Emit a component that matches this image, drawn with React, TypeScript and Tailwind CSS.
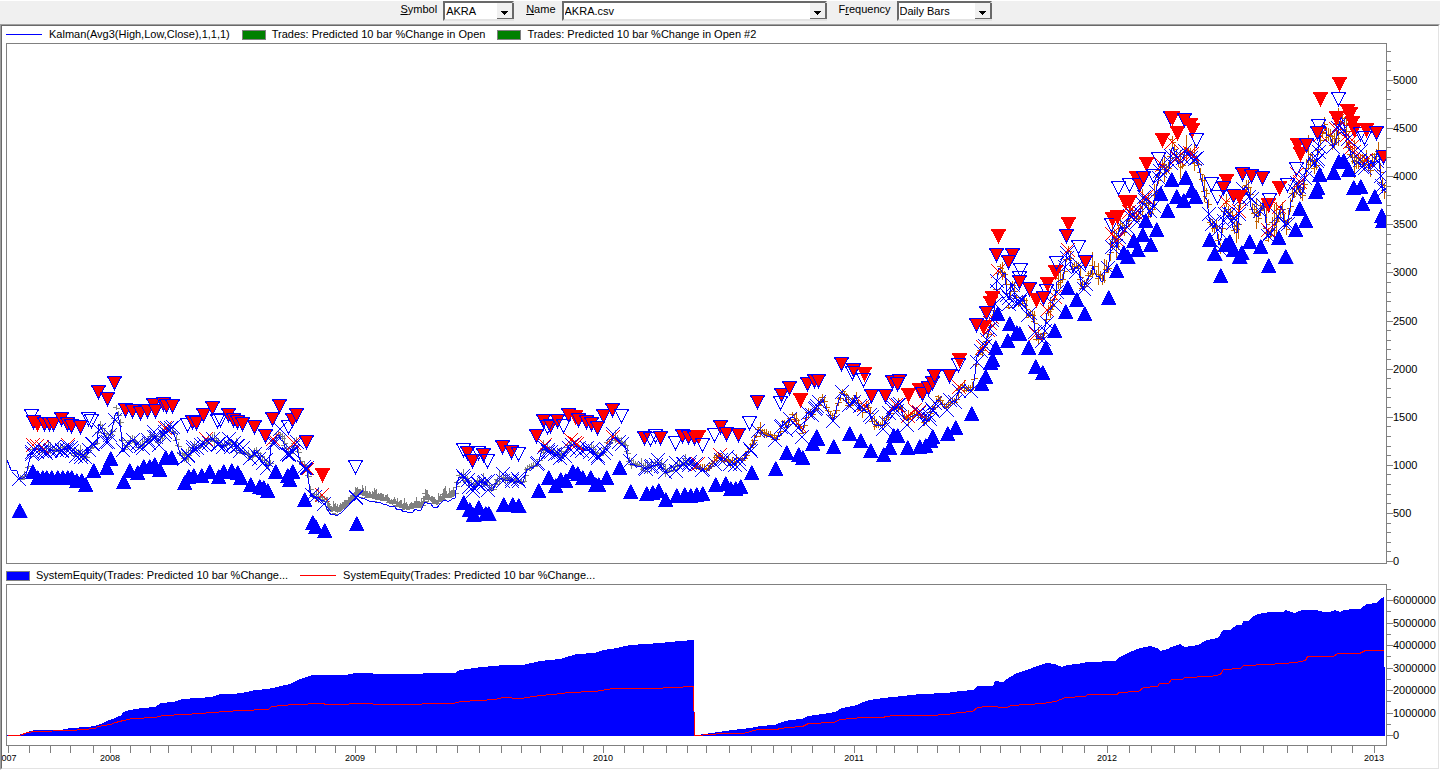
import React from 'react';
import type { ReactNode } from 'react';

type Point = [number, number];
// 'r' = filled, 'h' = hollow, 'b' = filled with outline
type Signal = [number, number, 'r' | 'h' | 'b'];

const toPoints = (data: string): Point[] =>
    data.trim().split(/\s+/).map((pair) => pair.split(',').map(Number) as Point);

const toSignals = (data: string): Signal[] =>
    data.trim().split(/\s+/).map((item) => {
        const [x, y] = item.slice(1).split(',').map(Number);
        return [x, y, item[0] as Signal[2]];
    });

const price = toPoints(`
7,458 11,468 17,470 20,479 26,476 30,457 33,448 43,450 55,449 67,448 78,453 86,457 90,447 97,443 99,422 107,440 112,432 116,407 120,423
123,450 128,442 133,438 138,448 153,435 158,442 167,428 173,430 180,452 185,458 193,448 213,438 220,445 230,442 240,450 250,457 255,450
267,465 270,463 271,445 279,433 289,455 296,442 300,460 307,470 311,495 323,498 330,511 337,513 348,503 357,494 365,497 380,500 407,509
422,507 425,500 437,504 443,498 455,495 458,477 465,478 473,488 480,480 492,489 501,477 523,482 527,468 538,463 543,447 553,452 563,455
570,442 577,447 592,448 598,458 605,447 613,437 625,445 630,463 647,467 658,462 667,472 683,462 693,465 705,470 718,457 730,463 742,460
753,443 758,429 777,440 783,420 787,427 792,413 802,433 807,412 812,415 822,398 833,420 842,390 850,405 855,395 862,412 867,402 872,422
883,425 893,408 900,407 907,420 915,413 927,420 938,398 945,407 955,400 960,387 973,388 977,354 983,350 988,333 994,313 997,280 999,267
1005,273 1008,307 1011,283 1018,303 1023,297 1028,313 1033,313 1036,337 1043,340 1047,313 1055,300 1057,283 1063,277 1067,250 1073,270
1078,267 1083,290 1088,273 1093,268 1098,277 1103,278 1108,265 1112,237 1117,243 1120,220 1125,233 1130,210 1138,218 1144,195 1152,214
1160,167 1169,170 1172,145 1180,170 1184,150 1197,162 1202,177 1206,197 1210,220 1215,223 1220,247 1223,220 1226,205 1237,230 1242,190
1247,187 1252,205 1258,216 1263,204 1268,233 1275,220 1281,205 1287,227 1292,203 1297,177 1302,190 1308,157 1311,167 1317,160 1321,130
1328,132 1333,143 1340,118 1347,138 1355,157 1360,155 1363,170 1368,158 1373,170 1378,157 1383,190`);

const sells = toSignals(`
h31,409 b33,415 r37,417 b44,417 b49,417 b53,417 b61,412 b67,417 b71,419 b80,420 b98,385 b107,392 b114,376 h88,412 h91,414
b125,403 b132,404 b140,406 b147,404 b153,398 b155,404 b163,397 b166,399 b172,399 h187,418 b192,415 b196,416 b203,408 b212,401
h217,414 h220,413 b228,408 b233,413 b237,415 b242,417 b254,420 b265,429 b279,399 b272,412 h288,420 b292,413 b296,408 b306,435
r322,468 h355,460 h463,443 b467,446 b472,454 h478,446 b483,448 h487,454 b502,440 b511,445 h518,447 b536,429 b543,414 b550,419
h547,420 b557,414 h563,419 b568,408 r575,410 b578,413 b586,415 b591,417 b597,421 b603,409 b612,403 h621,409 b644,431 h650,432
h655,429 b660,431 h675,436 b682,429 b688,430 b694,431 r698,430 h702,438 h714,428 b720,420 b726,427 b738,428 h749,416 b757,395
b781,388 h780,396 b789,381 r800,393 b807,377 b814,374 b818,374 b841,357 b853,363 h852,366 r864,367 h863,373 b871,389 b885,389
b892,375 b899,374 b897,377 r908,388 r919,383 b922,387 b928,381 b932,376 b934,369 b949,369 r959,353 h958,358 r983,320 b976,318
r990,296 b986,306 r992,291 r998,229 b996,248 b1012,248 b1008,255 h1020,263 h1019,271 b1019,275 b1029,282 r1036,293 r1047,277
h1046,284 b1043,291 r1055,265 h1056,256 r1068,217 b1066,229 h1078,240 b1085,255 r1112,212 h1111,218 r1117,210 r1125,195
r1129,195 h1118,181 h1129,178 r1136,171 b1139,178 b1143,171 r1146,157 h1158,152 h1153,169 r1162,133 b1170,111 r1172,111
r1177,126 b1184,113 r1190,118 r1192,123 h1196,133 h1211,177 r1226,174 b1223,181 h1217,190 b1233,189 r1239,190 b1242,167
b1251,169 b1262,171 r1268,198 h1269,193 r1279,181 h1287,178 h1296,162 r1297,138 r1300,147 b1306,138 r1320,92 h1318,119
b1317,126 r1339,77 h1338,92 r1336,111 r1347,104 r1350,107 r1352,116 r1354,123 h1360,127 r1366,123 h1364,131 b1376,126 b1383,150`);

const buys = toPoints(`
19,517 32,478 37,484 42,484 46,484 51,484 57,484 62,484 67,484 71,484 76,487 81,487 85,491 93,477 106,474 110,465 123,488
129,477 137,479 143,473 149,473 154,471 159,476 165,464 171,464 184,489 188,483 193,482 201,482 209,478 218,483 223,478
231,477 237,479 240,484 250,491 259,493 263,494 267,497 275,478 287,482 289,486 292,478 304,506 312,529 315,533 324,537
356,530 463,509 469,516 473,521 478,514 485,520 488,520 503,511 512,511 518,512 538,497 548,484 555,492 560,486 565,487
572,478 577,480 582,484 590,484 595,491 598,491 606,484 619,474 630,498 646,500 652,499 658,497 665,506 676,502 684,501
690,502 696,501 702,500 715,491 725,490 730,495 735,495 740,493 751,479 775,475 786,459 798,461 802,464 812,450 816,443
817,445 833,453 849,440 860,447 870,457 883,461 889,454 893,442 897,442 907,454 919,453 925,452 930,447 932,443 947,440
955,434 971,420 981,390 985,383 990,369 992,366 995,354 997,320 1009,330 1007,347 1016,339 1019,340 1028,354 1035,373
1042,379 1045,354 1054,337 1065,318 1067,294 1076,306 1084,320 1108,304 1116,277 1123,259 1127,263 1133,247 1137,256
1142,241 1150,251 1145,227 1156,236 1167,217 1160,200 1171,186 1176,203 1183,207 1185,184 1191,197 1195,203 1209,246
1214,260 1220,282 1225,251 1229,248 1233,256 1239,263 1241,259 1249,248 1260,253 1268,272 1278,244 1285,263 1295,236
1299,215 1305,227 1315,198 1317,194 1319,181 1333,179 1338,168 1343,167 1348,176 1353,194 1360,193 1362,210 1374,203
1381,222 1382,227`);

const equity = toPoints(`
7,735 19,735 27,732 35,730 61,730 70,728 87,727 95,726 103,723 107,721 115,718 122,715 123,712 130,710 142,708 155,707
161,703 173,702 183,699 212,697 220,694 233,694 247,692 255,690 268,689 277,687 290,684 300,679 312,675 345,675 355,673
390,674 455,673 460,670 475,668 480,667 495,666 502,665 523,665 540,661 560,659 577,654 595,653 603,650 617,648 630,645
660,643 680,641 693,640 694,640 694,735 698,735 718,732 733,730 750,728 760,726 775,725 782,722 790,720 802,719 808,716
823,714 835,712 842,708 857,705 863,702 870,700 883,698 903,696 920,694 947,693 960,691 973,690 978,686 993,686 995,681
1003,682 1010,677 1017,673 1027,670 1037,666 1047,663 1055,664 1062,667 1067,665 1077,664 1088,662 1115,661 1120,657 1130,652
1140,648 1150,646 1157,648 1160,651 1168,649 1171,647 1180,644 1185,647 1198,645 1207,640 1218,638 1223,630 1230,630
1237,625 1242,625 1243,621 1248,621 1252,617 1258,614 1270,612 1283,612 1285,610 1295,613 1302,610 1316,610 1324,612 1330,612
1335,610 1340,612 1344,610 1353,609 1360,609 1367,604 1376,603 1382,598 1384,597 1384,667 1385,667`);

const secondEquity = toPoints(`
7,735 19,735 27,732 35,731 70,730 95,728 97,726 110,724 115,722 123,720 132,718 155,717 162,715 185,714 212,712 240,710
268,709 271,706 293,704 323,703 325,704 343,704 355,703 390,704 453,703 460,701 479,700 495,699 502,697 520,698 540,695
562,693 567,692 595,691 612,688 653,688 673,687 693,686 694,735 712,734 720,733 743,733 757,729 775,729 787,727 802,726
808,723 833,722 840,719 862,717 881,717 893,715 928,715 947,714 959,712 972,711 977,707 987,706 1007,707 1010,705 1043,703
1055,701 1065,697 1085,696 1087,694 1117,694 1118,692 1138,691 1143,687 1157,686 1159,683 1168,683 1171,679 1182,679
1184,677 1210,676 1220,674 1223,669 1240,668 1243,665 1268,664 1295,662 1305,660 1307,656 1333,656 1337,653 1359,653
1365,650 1383,650`);

const dateTicks = [
    8, 29, 50, 70, 93, 110, 130, 150, 168, 191, 211, 233, 255, 276, 296, 315, 335, 355, 375, 396, 416, 436, 457, 479, 501, 521,
    540, 562, 583, 603, 624, 643, 666, 687, 706, 729, 751, 773, 791, 812, 834, 854, 876, 894, 917, 937, 959, 980, 1000, 1020,
    1040, 1062, 1084, 1107, 1129, 1151, 1174, 1195, 1219, 1240, 1263, 1287, 1307, 1331, 1352, 1374,
];

const years = [
    { x: 9, label: '007' },
    { x: 110, label: '2008' },
    { x: 355, label: '2009' },
    { x: 603, label: '2010' },
    { x: 854, label: '2011' },
    { x: 1107, label: '2012' },
    { x: 1374, label: '2013' },
];

const BULL = '#0000ff';
const BEAR = '#ff0000';
const AXIS = '#808080';

const noise = (n: number) => {
    const v = Math.sin(n * 127.1) * 43758.5453;
    return v - Math.floor(v);
};

function priceAt(x: number) {
    const next = price.findIndex((p) => p[0] >= x);
    if (next <= 0) return price[next === 0 ? 0 : price.length - 1][1];
    const [x0, y0] = price[next - 1];
    const [x1, y1] = price[next];
    return y0 + ((y1 - y0) * (x - x0)) / (x1 - x0);
}

// swings get wider as the price climbs
const closeAt = (x: number) => priceAt(x) + (noise(Math.floor(x / 3)) - 0.5) * (3 + Math.max(0, x - 960) / 30);

const isQuiet = (x: number) => x > 325 && x < 457;

const join = (points: Point[]) => points.map((p) => p.join(',')).join(' ');

// high-low stroke with the open tick on the left and the close tick on the right
function barPath(from: number, to: number) {
    let d = '';
    for (let x = from; x < to; x += isQuiet(x) ? 1 : 2) {
        const spike = noise(x + 7) > 0.85 ? 4 + Math.max(0, x - 960) / 40 : 0;
        const spread = 2 + noise(x) * 3 + Math.max(0, x - 940) / 100 + spike;
        const mid = Math.round(closeAt(x)) - (isQuiet(x) ? 2 : 0);
        const open = Math.round(mid + (noise(x + 5) - 0.5) * spread);
        d += `M${x + 0.5} ${mid - Math.round(spread)}V${mid + Math.round(isQuiet(x) ? 2 : spread * 0.8)}`;
        d += `M${x - 3} ${open + 0.5}h4M${x} ${mid + 0.5}h4`;
    }
    return d;
}

const kalman: Point[] = [];
for (let x = 7; x <= 1384; x += 2) {
    kalman.push([x, Math.round(closeAt(x) + (isQuiet(x) ? 3 : 1))]);
}

const cross = (x: number, y: number, r = 7) => `M${x - r} ${y - r}l${r * 2} ${r * 2}M${x - r} ${y + r}l${r * 2} ${-r * 2}`;

const blueCrosses = [
    ...sells.filter((s) => s[2] !== 'r').map(([x]) => cross(x + 1, Math.round(priceAt(x) - 4 + noise(x) * 7))),
    ...buys.map(([x]) => cross(x, Math.round(priceAt(x) - 2 + noise(x + 1) * 7))),
].join('');

const redCrosses = [
    ...sells.filter((s) => s[2] === 'r').map(([x]) => cross(x, Math.round(priceAt(x) - 3))),
    ...[33, 42, 68, 165, 206, 273, 294, 545, 571, 577, 720, 896, 915, 988].map((x) => cross(x, Math.round(priceAt(x) - 3))),
].join('');

function YearAxis() {
    return (
        <g>
            {dateTicks.map((x) => (
                <path key={x} d={`M${x + 0.5} 746v7`} stroke={AXIS} />
            ))}
            {years.map((year) => (
                <text key={year.label} x={year.x} y={761} fontSize={9} textAnchor="middle">
                    {year.label}
                </text>
            ))}
        </g>
    );
}

function PriceChart() {
    const ticks = Array.from({ length: 54 }, (_, i) => i);

    return (
        <svg viewBox="2 43 1436 524" className="block w-full" shapeRendering="crispEdges" fontFamily="Liberation Sans, Arial, sans-serif">
            <clipPath id="price-area">
                <rect x={7} y={44} width={1379} height={519} />
            </clipPath>
            <g clipPath="url(#price-area)" fill="none">
                <path d={barPath(20, 694)} stroke="#808080" />
                <path d={barPath(694, 1385)} stroke="#c06000" />
                <polyline points={join(kalman)} stroke={BULL} />
                <path d={redCrosses} stroke={BEAR} />
                <path d={blueCrosses} stroke={BULL} />
                <path d={cross(307, 469, 6)} stroke={BEAR} strokeWidth={2} />
                <path d={cross(306, 469, 6)} stroke={BULL} strokeWidth={2} />
                <path d={cross(613, 437)} stroke={BEAR} />
                {buys.map(([x, y], i) => (
                    <path key={i} d={`M${x - 7} ${y + 0.5}h15l-7 -14h-1z`} fill={BULL} stroke={BULL} strokeWidth={0.5} />
                ))}
                {sells.map(([x, y, kind], i) => (
                    <path
                        key={i}
                        d={`M${x - 6.5} ${y + 0.5}h14l-7 13z`}
                        fill={kind === 'h' ? 'none' : BEAR}
                        stroke={kind === 'r' ? BEAR : BULL}
                    />
                ))}
            </g>
            <rect x={6.5} y={43.5} width={1380} height={520} fill="none" stroke={AXIS} />
            {ticks.map((i) => (
                <path key={i} d={`M1387 ${Math.round(561 - i * 9.62) + 0.5}h${i % 5 ? 4 : 6}`} stroke={AXIS} />
            ))}
            {ticks.filter((i) => i % 5 === 0).map((i) => (
                <text key={i} x={1393} y={Math.round(561 - i * 9.62) + 4} fontSize={11}>
                    {i * 100}
                </text>
            ))}
        </svg>
    );
}

function EquityChart() {
    const ticks = Array.from({ length: 14 }, (_, i) => i);

    return (
        <svg viewBox="2 584 1436 184" className="block w-full" shapeRendering="crispEdges" fontFamily="Liberation Sans, Arial, sans-serif">
            <polygon points={`7,736 ${join(equity)} 1385,736`} fill={BULL} />
            <polyline points={join(secondEquity.map(([x, y]) => [x + 0.5, y + 0.5]))} fill="none" stroke={BEAR} />
            <rect x={6.5} y={584.5} width={1380} height={161} fill="none" stroke={AXIS} />
            {ticks.map((i) => (
                <path key={i} d={`M1387 ${Math.round(735 - i * 11.25) + 0.5}h${i % 2 ? 4 : 6}`} stroke={AXIS} />
            ))}
            {ticks.filter((i) => i % 2 === 0).map((i) => (
                <text key={i} x={1393} y={Math.round(735 - i * 11.25) + 4} fontSize={11}>
                    {i * 500000}
                </text>
            ))}
            <YearAxis />
        </svg>
    );
}

interface ComboProps {
    id: string;
    label: ReactNode;
    value: string;
    width: string;
}

function Combo({ id, label, value, width }: ComboProps) {
    return (
        <div className="flex items-start gap-1.5">
            <label htmlFor={id}>{label}</label>
            <div className={`relative ${width}`}>
                <select
                    id={id}
                    defaultValue={value}
                    className="block h-5 w-full appearance-none rounded-none border-2 border-t-[#696969] border-r-[#e3e3e3] border-b-[#e3e3e3] border-l-[#696969] bg-white pl-px text-[11px] leading-4 text-black outline-none"
                >
                    <option>{value}</option>
                </select>
                <span className="pointer-events-none absolute inset-y-0.5 right-0 flex w-[17px] items-center justify-center border-r-2 border-b border-[#696969] bg-[#f0f0f0]">
                    <svg viewBox="0 0 7 4" className="mt-1 h-1 w-[7px]" shapeRendering="crispEdges">
                        <path d="M0 0h7v1h-1v1h-1v1h-1v1h-1v-1h-1v-1h-1v-1h-1z" />
                    </svg>
                </span>
            </div>
        </div>
    );
}

interface LegendItemProps {
    color: string;
    line?: boolean;
    children: ReactNode;
}

function LegendItem({ color, line, children }: LegendItemProps) {
    return (
        <li className="flex items-center gap-1.5">
            {line ? <span className={`mr-px h-px w-9 ${color}`} /> : <span className={`h-2.5 w-6 border border-[#808080] ${color}`} />}
            {children}
        </li>
    );
}

export default function App() {
    return (
        <main className="flex flex-col bg-white font-['Liberation_Sans',Arial,sans-serif] text-[11px] leading-[17px] text-black">
            <div className="flex h-6 items-start justify-center gap-3 border-t border-white bg-[#f0f0f0] pr-12">
                <Combo id="symbol" label={<><u>S</u>ymbol</>} value="AKRA" width="w-[71px]" />
                <Combo id="name" label={<><u>N</u>ame</>} value="AKRA.csv" width="w-[265px]" />
                <Combo id="frequency" label={<>F<u>r</u>equency</>} value="Daily Bars" width="w-[95px]" />
            </div>

            <div className="border border-t-[#a0a0a0] border-r-white border-b-white border-l-[#a0a0a0]">
                <div className="border border-t-[#696969] border-r-[#e3e3e3] border-b-[#e3e3e3] border-l-[#696969]">
                    <ul className="flex gap-3 pl-1">
                        <LegendItem color="bg-[#0000ff]" line>Kalman(Avg3(High,Low,Close),1,1,1)</LegendItem>
                        <LegendItem color="bg-[#008000]">Trades: Predicted 10 bar %Change in Open</LegendItem>
                        <LegendItem color="bg-[#008000]">Trades: Predicted 10 bar %Change in Open #2</LegendItem>
                    </ul>
                    <PriceChart />
                    <ul className="flex gap-3 pl-1">
                        <LegendItem color="bg-[#0000ff]">SystemEquity(Trades: Predicted 10 bar %Change...</LegendItem>
                        <LegendItem color="bg-[#ff0000]" line>SystemEquity(Trades: Predicted 10 bar %Change...</LegendItem>
                    </ul>
                    <EquityChart />
                </div>
            </div>
        </main>
    );
}
